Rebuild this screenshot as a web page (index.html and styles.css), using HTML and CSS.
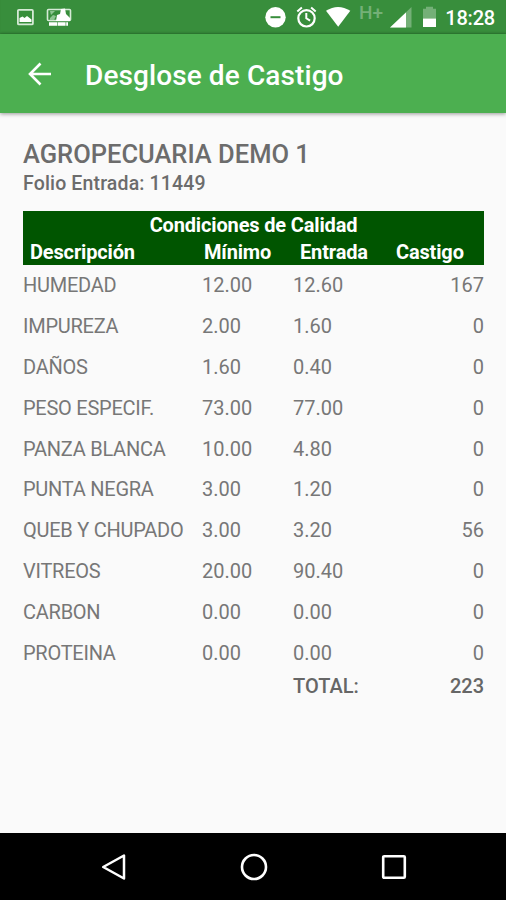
FILE: index.html
```html
<!DOCTYPE html>
<html lang="es">
<head>
  <meta charset="UTF-8">
  <meta name="viewport" content="width=device-width, initial-scale=1.0">
  <title>Desglose de Castigo</title>
  <link rel="stylesheet" href="styles.css">
</head>
<body>
  <div class="status-bar">
    <svg class="notifications" width="56" height="20" viewBox="0 0 56 20">
      <rect x="1.900" y="2.900" width="15" height="14.500" rx="1" fill="none" stroke="#d5ead6" stroke-width="1.800"/>
      <path d="M3.500 15v-4l3-1.500 2 1.500 2.500-2 4.500 3.500V15z" fill="#fff"/>
      <rect x="31.500" y="2.500" width="23" height="11" rx="1" fill="none" stroke="#d5ead6" stroke-width="1.600"/>
      <path d="M34 11l3-3 3 1-2 4h-4zM34 4h5l-4 4z" fill="#8fc592"/>
      <path d="M40 14l1-6 3-1 1-5 4-.500 1 5.500 4 4v3z" fill="#fff"/>
      <path d="M33 17h19" stroke="#fff" stroke-width="3.400" stroke-dasharray="8 .600"/>
    </svg>
    <svg class="indicators" width="94" height="24" viewBox="0 0 94 24">
      <circle cx="10.500" cy="12.200" r="10.200" fill="#fff"/>
      <path d="M5.500 12.200h10" stroke="#388e3c" stroke-width="2"/>
      <circle cx="41.500" cy="13.300" r="8.200" fill="none" stroke="#fff" stroke-width="2.200"/>
      <path d="M41.300 8v5.300l3.800 2.400M32.300 6.500l4.600-3.900M50.700 6.500l-4.600-3.900" fill="none" stroke="#fff" stroke-width="2"/>
      <path d="M61 5.800Q73 -1.800 85.300 5.800L73.200 21.800z" fill="#fff"/>
    </svg>
    <span class="network">H+</span>
    <svg class="signal" width="48" height="24" viewBox="0 0 48 24">
      <path d="M0 22.500L21.500 2v20.500z" fill="#74b077"/>
      <path d="M0 22.500L16 7.500v15z" fill="#fff"/>
      <path d="M33 3.800h3v-2h7v2h3v9.700h-13z" fill="#74b077"/>
      <path d="M33 13.500h13v8.500h-13z" fill="#fff"/>
    </svg>
    <span class="clock">18:28</span>
  </div>

  <div class="toolbar">
    <svg class="back" width="24" height="24" viewBox="0 0 24 24">
      <path d="M23 12H2M12.500 1.500L2 12l10.500 10.500" fill="none" stroke="#fff" stroke-width="2.600"/>
    </svg>
    <h1>Desglose de Castigo</h1>
  </div>

  <div class="content">
    <h2>AGROPECUARIA DEMO 1</h2>
    <h3>Folio Entrada: 11449</h3>

    <table>
      <colgroup>
        <col class="col-desc">
        <col class="col-min">
        <col class="col-ent">
        <col>
      </colgroup>
      <thead>
        <tr class="caption">
          <th colspan="4">Condiciones de Calidad</th>
        </tr>
        <tr class="labels">
          <th>Descripción</th>
          <th>Mínimo</th>
          <th>Entrada</th>
          <th>Castigo</th>
        </tr>
      </thead>
      <tbody>
        <tr><td>HUMEDAD</td><td>12.00</td><td>12.60</td><td>167</td></tr>
        <tr><td>IMPUREZA</td><td>2.00</td><td>1.60</td><td>0</td></tr>
        <tr><td>DAÑOS</td><td>1.60</td><td>0.40</td><td>0</td></tr>
        <tr><td>PESO ESPECIF.</td><td>73.00</td><td>77.00</td><td>0</td></tr>
        <tr><td>PANZA BLANCA</td><td>10.00</td><td>4.80</td><td>0</td></tr>
        <tr><td>PUNTA NEGRA</td><td>3.00</td><td>1.20</td><td>0</td></tr>
        <tr><td>QUEB Y CHUPADO</td><td>3.00</td><td>3.20</td><td>56</td></tr>
        <tr><td>VITREOS</td><td>20.00</td><td>90.40</td><td>0</td></tr>
        <tr><td>CARBON</td><td>0.00</td><td>0.00</td><td>0</td></tr>
        <tr><td>PROTEINA</td><td>0.00</td><td>0.00</td><td>0</td></tr>
      </tbody>
      <tfoot>
        <tr><td></td><td></td><td>TOTAL:</td><td>223</td></tr>
      </tfoot>
    </table>
  </div>

  <div class="nav-bar">
    <svg width="28" height="28" viewBox="0 0 28 28">
      <path d="M24 2.500v23L3.200 14z" fill="none" stroke="#fff" stroke-width="2.500" stroke-linejoin="round"/>
    </svg>
    <svg width="28" height="28" viewBox="0 0 28 28">
      <circle cx="14" cy="14" r="12" fill="none" stroke="#fff" stroke-width="2.600"/>
    </svg>
    <svg width="28" height="28" viewBox="0 0 28 28">
      <rect x="3.200" y="3.200" width="21.600" height="21.600" rx="1" fill="none" stroke="#fff" stroke-width="2.600"/>
    </svg>
  </div>
</body>
</html>
```

FILE: styles.css
```css
body {
  margin: 0;
  height: 900px;
  display: flex;
  flex-direction: column;
  font-family: Roboto, sans-serif;
  background-color: #fafafa;
  color: #6c6c6c;
  overflow: hidden;
}
svg {
  display: block;
  flex: none;
}
.status-bar {
  height: 34px;
  box-sizing: border-box;
  display: flex;
  align-items: flex-start;
  padding: 5px 11px 0 16px;
  background-color: #388e3c;
  box-shadow: inset 0 -2px 2px -1px #2f7c33;
  color: #fff;
}
.notifications {
  margin-top: 2px;
}
.indicators {
  margin-left: 193px;
}
.network {
  width: 30px;
  font-size: 19px;
  line-height: 16px;
  font-weight: 500;
  color: #74b077;
}
.signal {
  margin-left: 1px;
}
.clock {
  margin-left: auto;
  font-size: 20px;
  line-height: 27px;
  font-weight: 500;
  letter-spacing: -0.2px;
  white-space: nowrap;
}
.toolbar {
  height: 79px;
  display: flex;
  align-items: center;
  padding-left: 28px;
  background-color: #4caf50;
  box-shadow: 0 1px 4px rgba(0, 0, 0, 0.4);
}
h1 {
  margin: 5px 0 0 33px;
  font-size: 28px;
  line-height: 36px;
  font-weight: 500;
  letter-spacing: 0.1px;
  color: #fff;
}
.content {
  flex: 1;
  padding: 26px 22px 0 23px;
}
h2 {
  margin: 0;
  font-size: 25.5px;
  line-height: 30px;
  font-weight: 500;
}
h3 {
  margin: 0 0 12px;
  font-size: 19.5px;
  line-height: 30px;
  font-weight: 500;
  letter-spacing: 0.15px;
}
table {
  width: 461px;
  table-layout: fixed;
  border-collapse: collapse;
  font-size: 20px;
}
.col-desc {
  width: 179px;
}
.col-min {
  width: 91px;
}
.col-ent {
  width: 92px;
}
th, td {
  padding: 0;
  text-align: left;
  white-space: nowrap;
}
thead {
  background-color: #005500;
  color: #fff;
}
th {
  line-height: 26px;
  font-weight: 700;
  letter-spacing: -0.15px;
}
.caption th {
  height: 28px;
  text-align: center;
}
.labels th {
  height: 26px;
  padding-left: 7px;
}
.labels th:nth-child(2) {
  padding-left: 2px;
}
.labels th:nth-child(4) {
  padding-left: 11px;
}
td {
  height: 40.8px;
  line-height: 24px;
  color: #777;
}
td:first-child {
  letter-spacing: -0.25px;
}
td:last-child {
  text-align: right;
}
tfoot td {
  height: 26px;
  font-weight: 500;
  color: #666;
}
.nav-bar {
  height: 67px;
  display: flex;
  align-items: center;
  justify-content: center;
  gap: 112px;
  padding-left: 1px;
  background-color: #000;
}
```
